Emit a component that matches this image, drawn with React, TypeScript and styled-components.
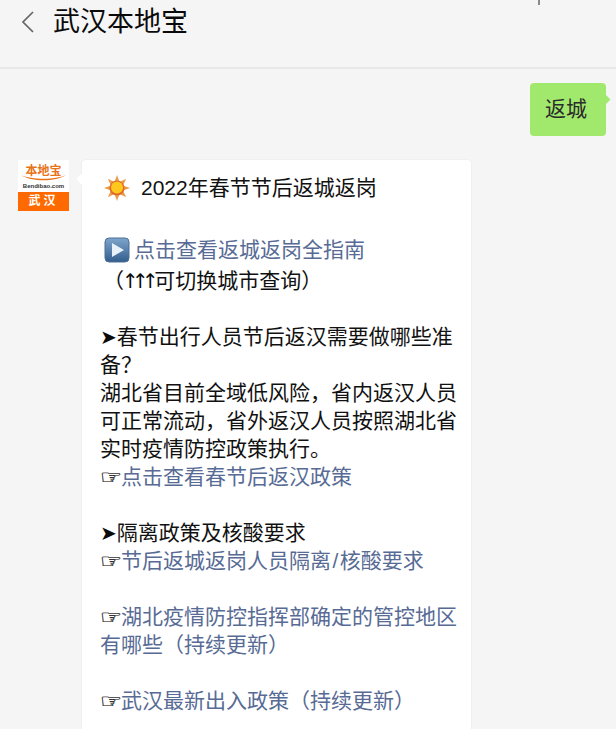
import React from "react";
import styled, { createGlobalStyle } from "styled-components";

const Global = createGlobalStyle`
  html, body { margin: 0; padding: 0; height: 729px; overflow: hidden; background: #f5f5f5; }
  body { font-family: "Liberation Sans", "Noto Sans CJK SC", "DejaVu Sans", sans-serif; }
`;

const Page = styled.div`
  width: 616px;
  height: 729px;
  overflow: hidden;
  background: #f5f5f5;
  color: #111;
`;

const Header = styled.header`
  position: relative;
  box-sizing: border-box;
  height: 69px;
  padding: 0 0 24px 19px;
  display: flex;
  align-items: center;
  gap: 15px;
  border-bottom: 2px solid #e8e8e8;
`;

const Title = styled.h1`
  margin: 0;
  font-size: 27px;
  line-height: 44px;
  font-weight: 400;
  color: #0a0a0a;
`;

const Tick = styled.span`
  position: absolute;
  left: 538px;
  top: 0;
  width: 2px;
  height: 5px;
  background: #8a8a8a;
`;

const Chat = styled.main`
  padding: 14px 10px 0 18px;
  display: flex;
  flex-direction: column;
  gap: 24px;
`;

const OutRow = styled.div`
  display: flex;
  justify-content: flex-end;
`;

const GreenBubble = styled.div`
  position: relative;
  box-sizing: border-box;
  width: 76px;
  height: 53px;
  padding-left: 15px;
  border-radius: 4px;
  background: #a0e96c;
  font-size: 21px;
  line-height: 51px;
  color: #2b2b2b;
  &::after {
    content: "";
    position: absolute;
    right: -3px;
    top: 13px;
    width: 7px;
    height: 7px;
    background: #a0e96c;
    transform: rotate(45deg);
  }
`;

const InRow = styled.div`
  display: flex;
  align-items: flex-start;
  gap: 13px;
`;

const Avatar = styled.div`
  width: 51px;
  height: 51px;
  flex: none;
  background: #fff;
  display: flex;
  flex-direction: column;
`;

const AvatarTop = styled.div`
  height: 32px;
  display: flex;
  flex-direction: column;
  align-items: center;
  position: relative;
`;

const LogoName = styled.span`
  font-size: 12px;
  line-height: 14px;
  font-weight: 700;
  color: #e8741a;
  margin-top: 4px;
`;

const LogoSwoosh = styled.svg`
  position: absolute;
  left: 2px;
  top: 14px;
  width: 47px;
  height: 8px;
`;

const LogoUrl = styled.span`
  position: absolute;
  left: 0;
  right: 0;
  top: 22px;
  text-align: center;
  font-size: 6px;
  line-height: 8px;
  font-weight: 700;
  color: #333;
`;

const AvatarBar = styled.div`
  height: 19px;
  background: #ff6a00;
  color: #fff;
  font-size: 12px;
  line-height: 19px;
  font-weight: 700;
  text-align: center;
  letter-spacing: 3px;
`;

const Card = styled.article`
  position: relative;
  box-sizing: border-box;
  width: 389px;
  padding: 13px 10px 0 18px;
  min-height: 600px;
  background: #fff;
  border-radius: 4px;
  box-shadow: 0 0 0 1px #f0f0f0;
  &::before {
    content: "";
    position: absolute;
    left: -4px;
    top: 15px;
    width: 8px;
    height: 8px;
    background: #fff;
    transform: rotate(45deg);
  }
`;

const Line = styled.div<{ $h?: number }>`
  height: ${(p) => p.$h ?? 28}px;
  line-height: ${(p) => p.$h ?? 28}px;
  font-size: 21px;
  white-space: nowrap;
  display: flex;
  align-items: center;
`;

const Spacer = styled.div<{ $h?: number }>`
  height: ${(p) => p.$h ?? 28}px;
`;

const Link = styled.span`
  color: #576b95;
`;

const Glyph = styled.span`
  font-family: "DejaVu Sans", sans-serif;
  font-size: 20px;
  color: #0a0a0a;
`;

const Arrows = styled(Glyph)`
  letter-spacing: -6.7px;
  margin-left: -2px;
  margin-right: 2px;
`;

const Hand = styled(Glyph)`
  display: inline-block;
  flex: none;
  width: 21px;
  font-size: 20px;
  color: #333;
  -webkit-text-stroke: 0.3px #333;
  transform: scaleX(1.25);
  transform-origin: left center;
`;

const Slash = styled.span`
  padding: 0 1.5px;
`;

const Emoji = styled.svg`
  flex: none;
  width: 26px;
  height: 26px;
`;

const TitleEmoji = styled(Emoji)`
  margin: 0 11px 0 4px;
`;

const PlayEmoji = styled(Emoji)`
  margin: 0 4px 0 4px;
`;

const Indent = styled.span`
  margin-left: 3px;
`;

const sunRays = [0, 45, 90, 135, 180, 225, 270, 315];

export default function App() {
  return (
    <Page>
      <Global />
      <Header>
        <svg width="19" height="24" viewBox="0 0 19 24" fill="none">
          <path d="M14 2 L4 12 L14 22" stroke="#666" strokeWidth="1.7" />
        </svg>
        <Title>武汉本地宝</Title>
        <Tick />
      </Header>
      <Chat>
        <OutRow>
          <GreenBubble>返城</GreenBubble>
        </OutRow>
        <InRow>
          <Avatar>
            <AvatarTop>
              <LogoName>本地宝</LogoName>
              <LogoSwoosh viewBox="0 0 47 8">
                <path d="M1 1 C12 6 35 6 46 1 C36 8 11 8 1 1 Z" fill="#e8741a" />
              </LogoSwoosh>
              <LogoUrl>Bendibao.com</LogoUrl>
            </AvatarTop>
            <AvatarBar>武汉</AvatarBar>
          </Avatar>
          <Card>
            <Line $h={30}>
              <TitleEmoji viewBox="0 0 26 26">
                {sunRays.map((a) => (
                  <path
                    key={a}
                    d="M13 0 L15.5 7 L10.5 7 Z"
                    fill="#ee9a48"
                    transform={`rotate(${a} 13 13)`}
                  />
                ))}
                <circle cx="13" cy="13" r="7.5" fill="#e06a28" />
                <circle cx="13" cy="12.5" r="6" fill="#ffc81e" />
              </TitleEmoji>
              2022年春节节后返城返岗
            </Line>
            <Spacer $h={31} />
            <Line $h={32}>
              <PlayEmoji viewBox="0 0 26 26">
                <defs>
                  <linearGradient id="pg" x1="0" y1="0" x2="0" y2="1">
                    <stop offset="0" stopColor="#7fa6cc" />
                    <stop offset="1" stopColor="#335d8c" />
                  </linearGradient>
                </defs>
                <rect x="1" y="1" width="24" height="24" rx="4" fill="url(#pg)" stroke="#4d6f96" />
                <path d="M8 6 L20 13 L8 20 Z" fill="#e8f0f8" />
              </PlayEmoji>
              <Link>点击查看返城返岗全指南</Link>
            </Line>
            <Line $h={30}>
              <Indent>（</Indent>
              <Arrows>↑↑↑</Arrows>可切换城市查询）
            </Line>
            <Spacer $h={27} />
            <Line><Glyph>➤</Glyph>春节出行人员节后返汉需要做哪些准</Line>
            <Line>备？</Line>
            <Line>湖北省目前全域低风险，省内返汉人员</Line>
            <Line>可正常流动，省外返汉人员按照湖北省</Line>
            <Line>实时疫情防控政策执行。</Line>
            <Line><Hand>☞</Hand><Link>点击查看春节后返汉政策</Link></Line>
            <Spacer />
            <Line><Glyph>➤</Glyph>隔离政策及核酸要求</Line>
            <Line><Hand>☞</Hand><Link>节后返城返岗人员隔离<Slash>/</Slash>核酸要求</Link></Line>
            <Spacer />
            <Line><Hand>☞</Hand><Link>湖北疫情防控指挥部确定的管控地区</Link></Line>
            <Line><Link>有哪些（持续更新）</Link></Line>
            <Spacer />
            <Line><Hand>☞</Hand><Link>武汉最新出入政策（持续更新）</Link></Line>
          </Card>
        </InRow>
      </Chat>
    </Page>
  );
}
